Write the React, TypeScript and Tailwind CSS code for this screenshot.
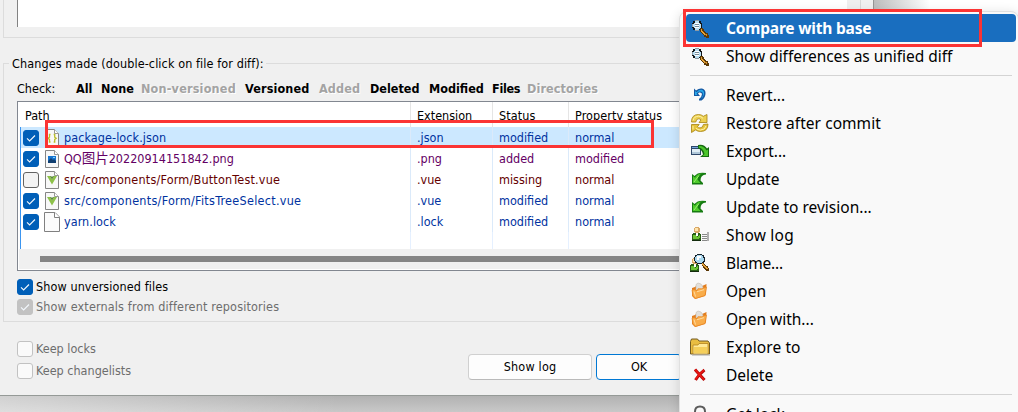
import type { ReactNode } from 'react';

const UI = "font-['DejaVu_Sans_Condensed','DejaVu_Sans','Noto_Sans_CJK_SC',sans-serif] [font-stretch:condensed]";

type BoxState = 'on' | 'off' | 'disabled-on' | 'disabled-off';

const boxStyles: Record<BoxState, string> = {
  on: 'border-[#005fb8] bg-[#005fb8]',
  off: 'border-[#626262] bg-[#f3f3f3]',
  'disabled-on': 'border-[#c2c2c2] bg-[#c2c2c2]',
  'disabled-off': 'border-[#c2c2c2] bg-[#fafafa]',
};

function CheckBox({ state }: { state: BoxState }) {
  return (
    <span className={`block h-4 w-4 shrink-0 rounded-[3px] border ${boxStyles[state]}`}>
      {(state === 'on' || state === 'disabled-on') && (
        <svg viewBox="0 0 14 14" className="block h-[14px] w-[14px]" fill="none" stroke="#f3f8fd" strokeWidth="1.1">
          <path d="M3 7.4 5.6 10 11 4.5" />
        </svg>
      )}
    </span>
  );
}

type FileKind = 'json' | 'image' | 'vue' | 'plain';

function FileIcon({ kind }: { kind: FileKind }) {
  if (kind === 'plain') {
    return (
      <svg viewBox="0 0 16 20" className="block h-5 w-4 shrink-0">
        <path d="M.5.5H11L15.5 5v14.5H.5z" fill="#fbfbfb" stroke="#808080" />
        <path d="M10.5.5V5.5H15.5" fill="#fff" stroke="#808080" />
      </svg>
    );
  }
  return (
    <svg viewBox="0 0 16 20" className="block h-5 w-4 shrink-0">
      <path d="M1.5 1.5H10.5L14.5 5.5v13H1.5z" fill="#f8f8f8" stroke="#858585" />
      <path d="M10.500 1.500v4h4" fill="#fff" stroke="#999" />
      {kind === 'json' && (
        <g fill="none" stroke="#b9bd28" strokeWidth="1.3">
          <path d="M6.500 6.500H5.500V9.200L4 10.300 5.500 11.400V14H6.500M9.700 6.500H10.700V9.200L12.200 10.300 10.700 11.400V14H9.700" />
        </g>
      )}
      {kind === 'image' && (
        <g>
          <path d="M4 7h8v7H4z" fill="#1675d1" />
          <path d="M4 12l3-3 2 2 1-1 2 2v2H4z" fill="#123f70" />
          <path d="M9 8h2v1H9z" fill="#7fd4ff" />
        </g>
      )}
      {kind === 'vue' && (
        <g>
          <path d="M3 6h3l2 3.600L10 6h3l-5 8.600z" fill="#8dc149" />
          <path d="M6 6h1.200L8 7.400 8.800 6H10L8 9.600z" fill="#4c7d2e" />
        </g>
      )}
    </svg>
  );
}

function Magnifier() {
  return (
    <g>
      <path d="M5 1h4v1h2v2h1v5h-1v2H9v1H5v-1H3V9H2V4h1V2h2z" fill="#111416" />
      <path d="M5 1h4v1H5zM2 5h1v3H2zM5 11h4v1H5z" fill="#8d9aa3" />
      <path d="M5 2h4v1h1v1h1v5h-1v1H9v1H5v-1H4V9H3V5h1V3h1z" fill="#b9e0f5" />
      <path d="M3 3h2v1H4v1H3zM9 2h1v1h1v2h-1V4H9zM3 8h1v1h1v2H4v-1H3z" fill="#111416" />
      <path d="M5 4h4v5H5z" fill="#fff" />
      <path d="M5 5h4v1H5zM5 7h4v1H5z" fill="#778c9a" />
      <path d="M10 9h3v1h1v2h1v1h1v1h2v2h1v3h-3v-1h-2v-2h-1v-1h-1v-1h-1v-1h-1z" fill="#5a3806" />
      <path d="M11 10h1v2h1v1h1v1h1v1h2v2h-1v-1h-2v-1h-1v-1h-1v-1h-1z" fill="#e5a33a" />
      <path d="M15 15h2v2h-1v-1h-1z" fill="#d18c25" />
    </g>
  );
}

function Person() {
  return (
    <g>
      <path d="M5 1h4v1h1v4H9v1H5V6H4V2h1z" fill="#d9a866" />
      <path d="M5 2h3v3H5z" fill="#ffe4ad" />
      <path d="M3 7h3l1 1 1-1h2l1 2v5H2V9z" fill="#285d15" />
      <path d="M3 9h2l2 2 2-2h1v2L8 13H3z" fill="#6bc434" />
      <path d="M6 7h2v3H6z" fill="#fff" />
      <path d="M2 14h9v1H2z" fill="#132c0d" />
    </g>
  );
}

type IconKind =
  | 'compare' | 'revert' | 'restore' | 'export' | 'update' | 'log'
  | 'blame' | 'open' | 'folder' | 'delete' | 'lock';

const drawings: Record<IconKind, ReactNode> = {
  compare: <Magnifier />,
  revert: (
    <g>
      <path d="M4 2.500l2 2Q9 2 12 2.500 16 3.500 15.500 8q-.5 4-4 6.500H9v-1.500Q12 10.500 12 8 11.500 6 9 6.500L8 7.500l2 2.500H4z" fill="#1459a4" />
      <path d="M5 5l1.500 1.200Q9 3.500 11.500 3.800 14.500 4.500 14 8 13.500 11 11 13 14 9 12.500 6.500 11 4.800 8.500 5.800L6.500 7.500l1 1.500H5z" fill="#29a9ea" />
    </g>
  ),
  restore: (
    <g>
      <path d="M1.500 8Q1.500 .5 8.500.5q2.900 0 4.800 1.800L17 .500V8.500H9l2-2.500Q10 4.800 8.500 4.800 6.200 4.800 5.800 8z" fill="#ecd052" stroke="#a78310" strokeWidth=".8" />
      <path d="M18 10q0 7.500-7.500 7.500-2.900 0-4.800-1.600L1.500 18.500v-8h7.700L7.500 12.700q.8 1.200 2.500 1.200 3 0 3.400-3.400z" fill="#e5c33b" stroke="#a78310" strokeWidth=".8" />
      <path d="M3 6.500Q4 2.200 8.500 2.200q2.500 0 4.500 2.100M16 12Q15 16 10.500 16q-2.600 0-4.700-1.800M3 12v3.500" fill="none" stroke="#fff2a8" />
    </g>
  ),
  export: (
    <g>
      <path d="M1 4h10v9H1z" fill="#30486a" />
      <path d="M2 5h8v1H2z" fill="#74a6da" />
      <path d="M2 7h8v5H2z" fill="#e0edf5" />
      <path d="M2 10h8v2H2z" fill="#afc7d9" />
      <path d="M8 3q6-1.500 9 3.500L19 5v10H10l3-2.500Q12 7.500 8 6.500z" fill="#176b11" />
      <path d="M9 4q5-.3 7.500 4.500L18 7.500V14h-5.500l2-2Q13.500 6.500 9 5.500z" fill="#4cc52b" />
    </g>
  ),
  update: (
    <g>
      <path d="M16 3v1.500q-5.500.4-5.500 6L13 13v1.500H2V4l2.500 2Q8 1.500 16 3z" fill="#167b12" />
      <path d="M13 3.500Q8.500 3.700 7.500 9.500L10.500 13H3V6l2 1.700Q7.500 3.200 13 3.500z" fill="#4fcb2c" />
      <path d="M4 12L9 5.500" stroke="#9cee70" />
    </g>
  ),
  log: (
    <g>
      <Person />
      <path d="M12 8h5v1h-5zM12 10h6v1h-6zM12 12h5v1h-5zM12 14h6v1h-6z" fill="#8a8a8a" />
      <path d="M17 6h1.500v9H17z" fill="#b0b0b0" />
    </g>
  ),
  blame: (
    <g>
      <g transform="translate(-2 3)"><Person /></g>
      <path d="M7 0h5v1h2v2h1v5h-1v1h-2v1H7V9H5V7H4V3h1V1h2z" fill="#17222b" />
      <path d="M7 1h5v1h1v2h1v3h-1v1h-1v1H7V8H6V7H5V3h1V2h1z" fill="#a9d8ef" />
      <path d="M7 2h4v2H9v2H7z" fill="#fff" />
      <path d="M12 9h2v1h1v1h1v1h2v2h1v3h-3v-1h-1v-1h-1v-1h-1v-2h-1z" fill="#5a3806" />
      <path d="M12 9h1v1h1v1h1v1h1v1h1v1h1v1h-2v-1h-1v-1h-1v-1h-1v-1h-1z" fill="#e5a33a" />
    </g>
  ),
  open: (
    <g>
      <path d="M2 6l3-1 1-1 5 .5L16.500 2 16 12l-1 2-10 3-3-3z" fill="#e27d1e" />
      <path d="M6 2.500L8 1l3 1 2 3v3H6z" fill="#e3e0db" stroke="#c4bcb0" strokeWidth=".6" />
      <path d="M2 8l2-.5 3 1.200 1-2h3.500L16.500 5 15 13.500 5.500 16.500 3 14z" fill="#f9ad4b" stroke="#ea8722" strokeWidth=".7" />
      <path d="M4 9.500l1.500 5M7 9.700l7-2" stroke="#ffdba0" fill="none" />
    </g>
  ),
  folder: (
    <g>
      <path d="M.5 3.500l1-2.500h6l1.500 2H18L19.500 5v11H.5z" fill="#e9bd41" stroke="#725b22" />
      <path d="M3 7h5l1-1.500h9V16H3z" fill="#ffe997" stroke="#b4831e" strokeWidth=".8" />
      <path d="M4 9h13v6H4z" fill="#f5cf5a" />
      <path d="M2 17h18" stroke="#a7a7a7" />
    </g>
  ),
  delete: (
    <g>
      <path d="M5 3.500Q8 7 14.500 14M14.500 4Q9 8 5.500 14" fill="none" stroke="#b30808" strokeWidth="3" />
      <path d="M5 3.500Q8 7 14 13.500M14 4Q9 8 5.500 13.500" fill="none" stroke="#ed1713" strokeWidth="1.600" />
    </g>
  ),
  lock: (
    <g>
      <path d="M5 11V6.500Q5 1.500 10 1.500t5 5V11" fill="none" stroke="#5c5c5c" strokeWidth="2" />
      <path d="M3 9h14v8H3z" fill="#888" />
    </g>
  ),
};

function MenuIcon({ kind }: { kind: IconKind }) {
  return (
    <svg viewBox="0 0 18 18" className="block h-[18px] w-[18px] shrink-0 overflow-visible" shapeRendering={kind === 'compare' || kind === 'blame' || kind === 'log' ? 'crispEdges' : 'auto'}>
      {drawings[kind]}
    </svg>
  );
}

const filters = [
  { label: 'All', enabled: true, box: 'w-[25px]' },
  { label: 'None', enabled: true, box: 'w-[40px]' },
  { label: 'Non-versioned', enabled: false, box: 'w-[104px] tracking-[0.2px]' },
  { label: 'Versioned', enabled: true, box: 'w-[74px] tracking-[0.15px]' },
  { label: 'Added', enabled: false, box: 'w-[51px] tracking-[0.15px]' },
  { label: 'Deleted', enabled: true, box: 'w-[59px]' },
  { label: 'Modified', enabled: true, box: 'w-[63px]' },
  { label: 'Files', enabled: true, box: 'w-[35px] tracking-[-0.3px]' },
  { label: 'Directories', enabled: false, box: 'w-[90px] tracking-[0.1px]' },
];

interface FileRow {
  name: ReactNode;
  tracking: string;
  kind: FileKind;
  ext: string;
  status: string;
  prop: string;
  checked: boolean;
  selected?: boolean;
  color: string;
}

const rows: FileRow[] = [
  { name: 'package-lock.json', tracking: 'tracking-[0.08px]', kind: 'json', ext: '.json', status: 'modified', prop: 'normal', checked: true, selected: true, color: 'text-[#0032a0]' },
  { name: <>QQ<span className="text-[13.5px] leading-none">图片</span>20220914151842.png</>, tracking: '', kind: 'image', ext: '.png', status: 'added', prop: 'modified', checked: true, color: 'text-[#640064]' },
  { name: 'src/components/Form/ButtonTest.vue', tracking: 'tracking-[0.2px]', kind: 'vue', ext: '.vue', status: 'missing', prop: 'normal', checked: false, color: 'text-[#640000]' },
  { name: 'src/components/Form/FitsTreeSelect.vue', tracking: 'tracking-[0.28px]', kind: 'vue', ext: '.vue', status: 'modified', prop: 'normal', checked: true, color: 'text-[#0032a0]' },
  { name: 'yarn.lock', tracking: 'tracking-[0.05px]', kind: 'plain', ext: '.lock', status: 'modified', prop: 'normal', checked: true, color: 'text-[#0032a0]' },
];

function FileTable() {
  return (
    <div className="ml-[13px] flex h-[170px] flex-col border-y border-l border-[#828790] bg-white">
      <div className="flex h-[25px] shrink-0 items-center pl-[2px]">
        <div className="h-full w-[390px] shrink-0 pt-[6px] pl-[5px]">Path</div>
        <div className="h-full w-[82px] shrink-0 border-l border-[#e5e5e5] pt-[6px] pl-[6px]">Extension</div>
        <div className="h-full w-[76px] shrink-0 border-l border-[#e5e5e5] pt-[6px] pl-[6px] tracking-[0.1px]">Status</div>
        <div className="h-full grow border-l border-[#e5e5e5] pt-[6px] pl-[6px] tracking-[0.1px] whitespace-nowrap">Property status</div>
      </div>
      <div className="ml-[2px] flex h-[122px] shrink-0 flex-col border-l border-[#3b95f0]">
        {rows.map((r, i) => (
          <div key={i} className={`flex h-[21px] shrink-0 items-center ${r.color} ${r.selected ? 'bg-[#cce8ff]' : ''}`}>
            <div className="flex h-full w-[389px] shrink-0 items-center pl-[2px]">
              <CheckBox state={r.checked ? 'on' : 'off'} />
              <span className="ml-[5px]"><FileIcon kind={r.kind} /></span>
              <span className={`ml-[4px] whitespace-nowrap ${r.tracking}`}>{r.name}</span>
            </div>
            <div className="h-full w-[82px] shrink-0 border-l border-[#dbeafa] pl-[6px] leading-[21px]">{r.ext}</div>
            <div className="h-full w-[76px] shrink-0 border-l border-[#dbeafa] pl-[6px] leading-[21px]">{r.status}</div>
            <div className="h-full grow border-l border-[#dbeafa] pl-[6px] leading-[21px]">{r.prop}</div>
          </div>
        ))}
        <div className="flex grow">
          <div className="w-[389px]" />
          <div className="w-[82px] border-l border-[#e5f0ff]" />
          <div className="w-[76px] border-l border-[#e5f0ff]" />
          <div className="border-l border-[#e5f0ff]" />
        </div>
      </div>
      <div className="ml-px h-[20px] bg-[#f0f0f0] pt-[7px] pl-[21px]">
        <div className="h-[6px] bg-[#858585]" />
      </div>
    </div>
  );
}

function Dialog() {
  return (
    <div className="flex h-[396px] w-full flex-col border-b border-[#959a97] bg-[#f0f0f0]">
      <div className="ml-[3px] h-[38px] shrink-0 border-b border-l border-[#dcdcdc] pl-[13px]">
        <div className="h-[27px] border-l border-[#828282] bg-white" />
      </div>
      <div className="mt-[25px] ml-[3px] flex h-[259px] shrink-0 flex-col border-y border-l border-[#dcdcdc]">
        <div className="-mt-[9px] ml-[5px] h-[18px] w-[257px] bg-[#f0f0f0] pl-[3px] leading-[18px] tracking-[0.1px] whitespace-nowrap">
          Changes made (double-click on file for diff):
        </div>
        <div className="mt-[7px] flex h-[18px] items-center pl-[13px] leading-[18px]">
          <span className="w-[59px] shrink-0">Check:</span>
          {filters.map((f) => (
            <span key={f.label} className={`shrink-0 font-bold whitespace-nowrap ${f.box} ${f.enabled ? 'text-black' : 'text-[#a3a3a3] [text-shadow:1px_1px_0_#fff]'}`}>
              {f.label}
            </span>
          ))}
        </div>
        <div className="mt-[3px]"><FileTable /></div>
        <div className="mt-[8px] ml-[13px] flex h-4 items-center gap-[3px]">
          <CheckBox state="on" /><span className="tracking-[0.1px]">Show unversioned files</span>
        </div>
        <div className="mt-[4px] ml-[13px] flex h-4 items-center gap-[3px] text-[#6d6d6d]">
          <CheckBox state="disabled-on" /><span className="tracking-[0.15px]">Show externals from different repositories</span>
        </div>
      </div>
      <div className="mt-[19px] flex pl-[17px]">
        <div className="flex w-[451px] flex-col gap-[6px] text-[#6d6d6d]">
          <div className="flex h-4 items-center gap-[3px]"><CheckBox state="disabled-off" /><span>Keep locks</span></div>
          <div className="flex h-4 items-center gap-[3px]"><CheckBox state="disabled-off" /><span>Keep changelists</span></div>
        </div>
        <button className="mt-[13px] h-[26px] w-[124px] rounded-[4px] border border-[#d0d0d0] border-b-[#bababa] bg-[#fdfdfd] tracking-[0.2px]">Show log</button>
        <button className="mt-[13px] ml-[4px] h-[26px] w-[86px] rounded-[4px] border border-[#0078d4] bg-[#fdfdfd]">OK</button>
      </div>
    </div>
  );
}

const menuItems: { label: string; icon: IconKind; tracking?: string }[] = [
  { label: 'Revert...', icon: 'revert' },
  { label: 'Restore after commit', icon: 'restore', tracking: 'tracking-[0.05px]' },
  { label: 'Export...', icon: 'export' },
  { label: 'Update', icon: 'update' },
  { label: 'Update to revision...', icon: 'update' },
  { label: 'Show log', icon: 'log', tracking: 'tracking-[0.2px]' },
  { label: 'Blame...', icon: 'blame', tracking: 'tracking-[-0.2px]' },
  { label: 'Open', icon: 'open' },
  { label: 'Open with...', icon: 'open' },
  { label: 'Explore to', icon: 'folder', tracking: 'tracking-[0.1px]' },
  { label: 'Delete', icon: 'delete' },
];

function MenuItem({ label, icon, active = false, tracking = '' }: { label: string; icon: IconKind; active?: boolean; tracking?: string }) {
  return (
    <div className={`mr-[2px] ml-[6px] flex h-7 shrink-0 items-center rounded-[4px] pl-[4px] whitespace-nowrap ${active ? 'bg-[#196ebf] font-bold text-white' : 'text-black'}`}>
      <MenuIcon kind={icon} />
      <span className={`ml-[18px] ${tracking}`}>{label}</span>
    </div>
  );
}

function Separator() {
  return <div className="mr-[6px] ml-[10px] h-[11px] shrink-0 pt-[5px]"><div className="h-px bg-[#d4d4d4]" /></div>;
}

function ContextMenu() {
  return (
    <div className="absolute top-[11px] left-[679px] flex h-[420px] w-[340px] flex-col rounded-t-[8px] border border-[#e0e0e0] bg-[#f9f9f9] pt-[2px] font-['Noto_Sans',sans-serif] text-[15.5px] shadow-[0_2px_12px_rgba(0,0,0,0.14)]">
      <MenuItem label="Compare with base" icon="compare" tracking="tracking-[-0.19px]" active />
      <MenuItem label="Show differences as unified diff" icon="compare" tracking="tracking-[-0.04px]" />
      <Separator />
      {menuItems.map((m) => <MenuItem key={m.label} {...m} />)}
      <Separator />
      <MenuItem label="Get lock" icon="lock" />
    </div>
  );
}

export default function App() {
  return (
    <div className={`relative flex h-[412px] w-[1018px] flex-col overflow-hidden bg-white text-[12.5px] leading-[16px] text-black ${UI}`}>
      <div className="flex h-[396px] shrink-0">
        <div className="w-[847px] shrink-0"><Dialog /></div>
        <div className="w-[14px] border-r border-[#d8d8d8] bg-[#efefef]" />
        <div className="w-[13px] border-r border-[#969696] bg-[#f0f0f0]" />
        <div className="w-[56px] bg-linear-to-r from-[#bdbdbd] to-white" />
      </div>
      <div className="h-4 bg-linear-to-b from-[#b2b2b2] to-[#c8c8c8]">
        <div className="h-full w-[340px] bg-linear-to-r from-white/40 to-transparent" />
      </div>
      <ContextMenu />
      <div className="absolute top-[120px] left-[45px] h-[28px] w-[609px] border-3 border-[#fb3434]" />
      <div className="absolute top-[9px] left-[683px] h-[38px] w-[299px] border-3 border-[#fb3434]" />
    </div>
  );
}
